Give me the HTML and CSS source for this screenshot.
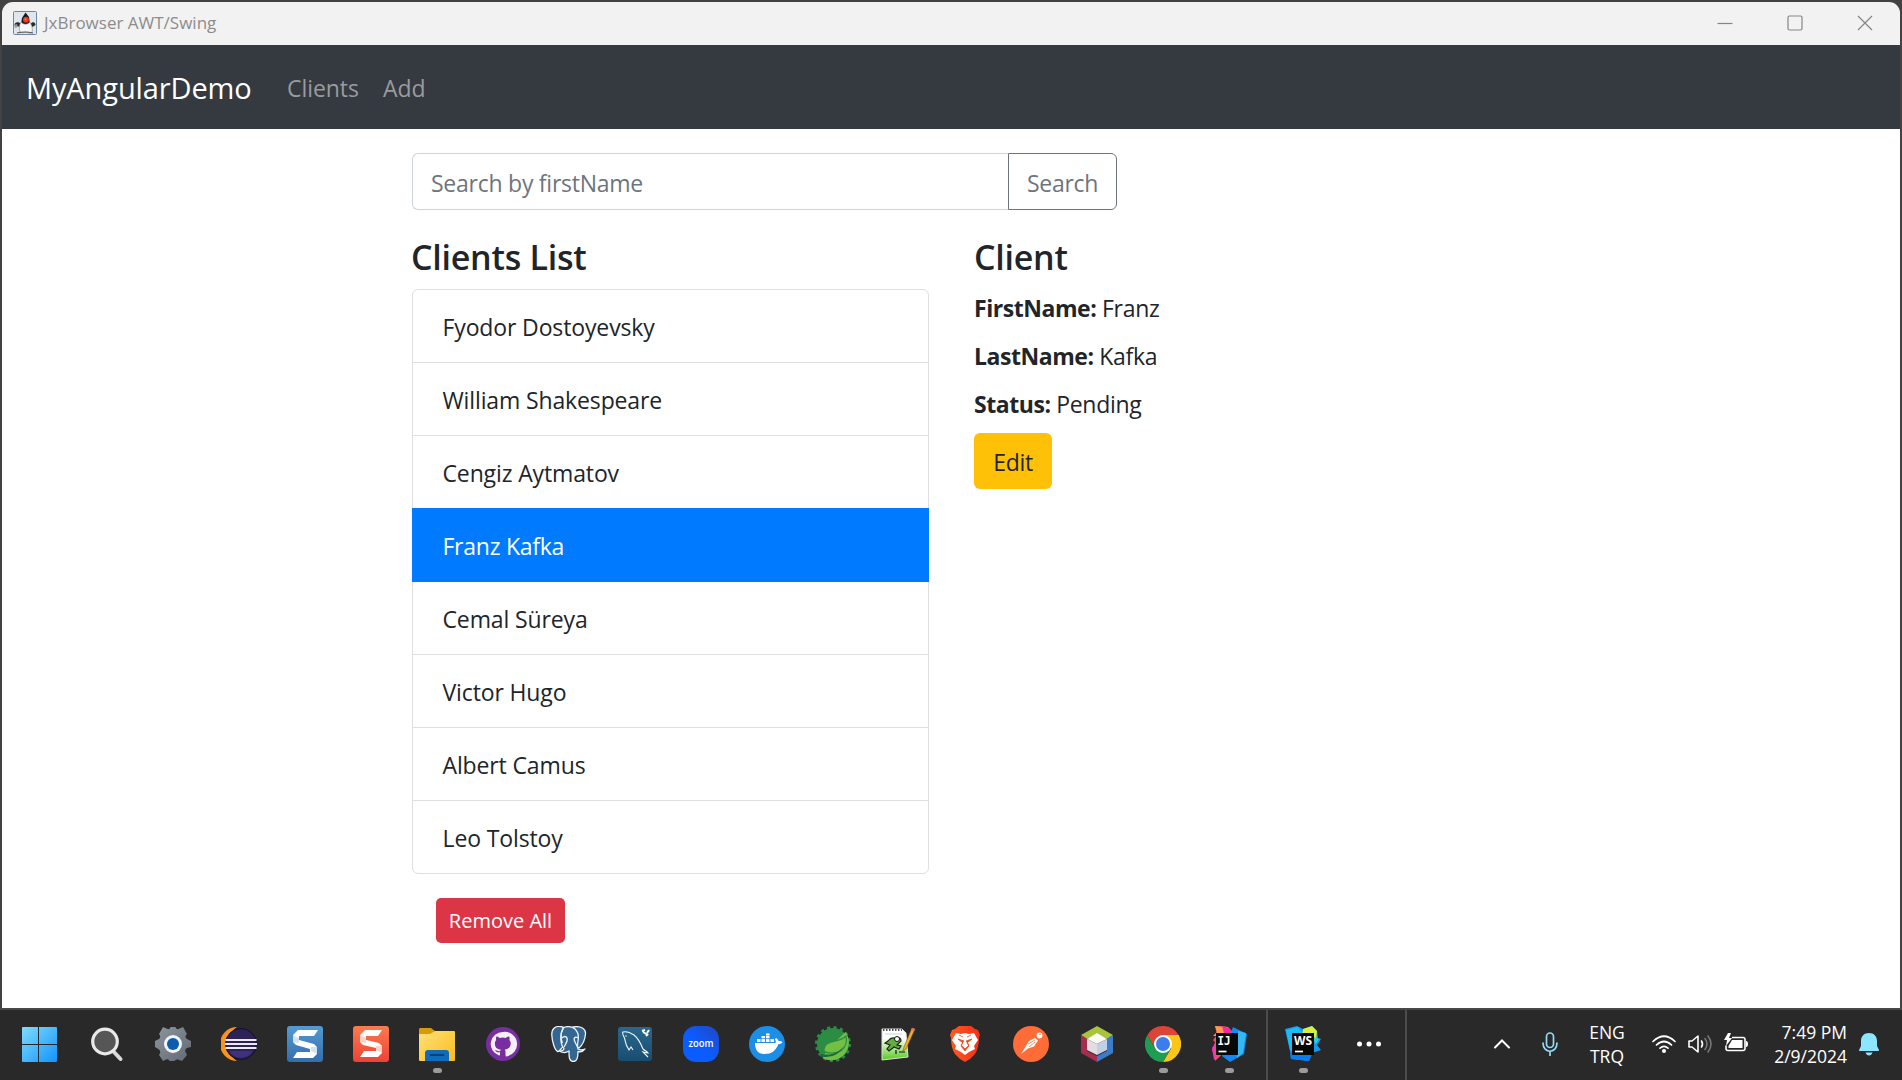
FILE: index.html
```html
<!DOCTYPE html>
<html lang="en">
<head>
<meta charset="utf-8">
<title>JxBrowser AWT/Swing</title>
<link rel="stylesheet" href="styles.css">
</head>
<body>
<div class="desktop">
  <div class="window">
    <header class="titlebar">
      <svg class="duke" viewBox="0 0 24 24">
        <rect x=".5" y=".5" width="23" height="23" rx="1" fill="#dfe6ee" stroke="#6d86a8"/>
        <path d="M1.500 14c0-3 4-4 7-1l-2 3c-2-2-3 0-5-2zM22.500 14c0-3-3-4-5-1l2 3z" fill="#2a2a2a"/>
        <path d="M12.500 1.500L9 7l-1 6h9l-1-7z" fill="#191919"/>
        <path d="M8 11c3 3 6 3 9 0 2 4 3 8 2 10-1 2-4 1-6 0-2 1-5 1-6 0-1-3-1-7 1-10z" fill="#f6f6f6" stroke="#888" stroke-width=".6"/>
        <path d="M4 22q8-2 16 0" stroke="#555" stroke-width="1.200" fill="none"/>
        <path d="M1 14l3-1 1 3-3 1z" fill="#999"/>
        <circle cx="13" cy="8.800" r="3" fill="#e8351c"/>
        <circle cx="12.500" cy="8.300" r="1.100" fill="#ff7a52"/>
      </svg>
      <span class="title">JxBrowser AWT/Swing</span>
      <div class="controls">
        <svg class="control" viewBox="0 0 16 16"><path d="M.5 8.5h15"/></svg>
        <svg class="control" viewBox="0 0 16 16"><rect x="1" y="1" width="14" height="14" rx="1.5"/></svg>
        <svg class="control" viewBox="0 0 16 16"><path d="M1 1l14 14M15 1L1 15"/></svg>
      </div>
    </header>
    <nav class="navbar">
      <a class="brand">MyAngularDemo</a>
      <a class="nav-link nav-clients">Clients</a>
      <a class="nav-link nav-add">Add</a>
    </nav>
    <main class="page">
      <div class="search">
        <div class="search-input">Search by firstName</div>
        <div class="search-button">Search</div>
      </div>
      <div class="columns">
        <section class="clients">
          <h4 class="heading">Clients List</h4>
          <ul class="list">
            <li class="item">Fyodor Dostoyevsky</li>
            <li class="item">William Shakespeare</li>
            <li class="item">Cengiz Aytmatov</li>
            <li class="item active">Franz Kafka</li>
            <li class="item">Cemal Süreya</li>
            <li class="item">Victor Hugo</li>
            <li class="item">Albert Camus</li>
            <li class="item">Leo Tolstoy</li>
          </ul>
          <div class="remove">Remove All</div>
        </section>
        <section class="details">
          <h4 class="heading">Client</h4>
          <p class="field"><strong>FirstName:</strong> Franz</p>
          <p class="field"><strong>LastName:</strong> Kafka</p>
          <p class="field"><strong>Status:</strong> Pending</p>
          <div class="edit">Edit</div>
        </section>
      </div>
    </main>
  </div>
  <footer class="taskbar">
    <div class="apps">
      <div class="app start"><svg viewBox="0 0 36 36">
        <defs><linearGradient id="win" x1="0" y1="0" x2="1" y2="1"><stop offset="0" stop-color="#7fdcff"/><stop offset="1" stop-color="#1393fb"/></linearGradient>
        <clipPath id="panes"><path d="M2 1h15v17H1V2q0-1 1-1zM18 1h17q1 0 1 1v16H18zM1 19h16v17H2q-1 0-1-1zM18 19h18v16q0 1-1 1H18z"/></clipPath></defs>
        <rect x="1" y="1" width="35" height="35" fill="url(#win)" clip-path="url(#panes)"/></svg></div>
      <div class="app"><svg viewBox="0 0 36 36"><path d="M24 25l7.5 8" stroke="#d9d9d9" stroke-width="4" stroke-linecap="round"/><circle cx="16" cy="15.5" r="12.3" fill="#565656" stroke="#e9e9e9" stroke-width="3.2"/></svg></div>
      <div class="app"><svg viewBox="0 0 36 36"><defs><linearGradient id="gear" x1="0" y1="0" x2="1" y2="1"><stop offset="0" stop-color="#8c949c"/><stop offset="1" stop-color="#626b75"/></linearGradient></defs>
        <path d="M8 1l4 1.8Q15 4 15.5 1h5Q21 4 24 2.8L28 1l4 7q-3 2.500 0 5l4 2v6l-4 1q-3 2-1 5l1 2-5 6-4-1.500q-3-.5-3.500 1.500h-5q-.5-2.500-3.500-1.500L8 35l-4-6q2.500-3 0-5.500L0 21v-6l4-2q2.500-2 0-5z" fill="url(#gear)"/><circle cx="18" cy="18" r="9" fill="#f2f5f7"/><circle cx="18" cy="18" r="6" fill="#0b5cb0"/></svg></div>
      <div class="app"><svg viewBox="0 0 36 36"><path d="M16 1A17 17 0 0 0 16 35 20 20 0 0 1 16 1z" fill="#f7941e"/><circle cx="20" cy="18" r="15.500" fill="#2c2255" stroke="#130d30"/><path d="M8 25h24a14 14 0 0 1-24 0z" fill="#40317c"/><path d="M4.500 14h31M4 18h32M4.500 22h31" stroke="#eceaf6" stroke-width="2.100"/></svg></div>
      <div class="app"><svg viewBox="0 0 36 36"><defs><linearGradient id="snagblue" x2="0" y2="1"><stop stop-color="#549bd3"/><stop offset="1" stop-color="#336dac"/></linearGradient></defs><rect width="36" height="36" rx="3" fill="url(#snagblue)"/><path d="M11 4h20l-4 6H12v4l15 4 3 3v7l-4 4H6l4-6h13v-3L9 19l-3-3V9z" fill="#fff"/><path d="M6 9v7l6 1v-5zM30 21v7l-6-3v-4z" fill="#d4e2ef"/></svg></div>
      <div class="app"><svg viewBox="0 0 36 36"><defs><linearGradient id="snagred" x2="0" y2="1"><stop stop-color="#fb7b4e"/><stop offset="1" stop-color="#ef4136"/></linearGradient></defs><rect width="36" height="36" rx="3" fill="url(#snagred)"/><path d="M12 4h17l-4 6H13v4l13 3 3 3v7l-4 4H7l4-6h12v-3L10 19l-3-3V9z" fill="#fff"/><path d="M7 9v7l6 1v-5zM29 20v7l-6-3v-4z" fill="#fbd1c8"/></svg></div>
      <div class="app running"><svg viewBox="0 0 36 36"><defs><linearGradient id="folder" x2="1" y2="1"><stop stop-color="#ffe17a"/><stop offset="1" stop-color="#f9bd1b"/></linearGradient></defs><path d="M1 2h11l4 3-3 4H0V3z" fill="#d79b08"/><path d="M0 8h11l5-3h19q1 0 1 1v28q0 1-1 1H1q-1 0-1-1z" fill="url(#folder)"/><path d="M6 34v-7q0-3 3-3h18q3 0 3 3v8H6z" fill="#0f6cbd"/><path d="M11.500 29h13" stroke="#0a3f7a" stroke-width="1.800" stroke-linecap="round"/></svg></div>
      <div class="app"><svg viewBox="0 0 36 36"><circle cx="18" cy="18" r="17" fill="#782da0"/><path d="M18 6a12 12 0 0 0-4 23.400c.8.100 1-.4 1-.9v-2.300c-3.400.7-4.400-1.200-4.900-2.500 1.800.8 2.300 1.600 5.200 1.400 0-.7.300-1.200.6-1.500-5-.6-6-3.400-6-6.200 0-1.500.5-2.500 1.300-3.300-.4-1.300-.2-2.600.2-3.500 1.300 0 2.500.7 3.400 1.400q3-.8 6 0c1-.8 2-1.400 3.400-1.400.5 1.200.5 2.400.2 3.500.9 1 1.300 2 1.300 3.300 0 3.400-2 5.700-6 6.200.6.600.8 1.400.8 2.300v3.600c0 .5.300 1 1 .9A12 12 0 0 0 18 6z" fill="#f4effa"/></svg></div>
      <div class="app"><svg viewBox="0 0 36 36" fill="#336791" stroke="#eef3f7" stroke-width="1.300" stroke-linejoin="round"><path d="M12 1C4-1 .5 3 .8 9c.2 6 3 16 6 16.500 2 .3 3-3 5-4.500z"/><path d="M22 1c8-1.500 13 2 12.500 7-.5 6-3 11-6.500 14l-6-2z"/><path d="M12 2c3-2 9-2 12 1 3 3 4 7 3 12-.5 3-1 6 0 8 2 1 5 1 7 0-2 3-5 3-7 2.500 0 4 0 10-4.500 10S18 31 18 25c-3 2-6 2-9 .5 2-1 4-1 4-3-4-4-4-14-1-20.500z"/><path d="M11 12c3-3 6-1 5 3-.5 2-2 4-3 6M27 12c-3-2-5 0-3 4l3 6M12.500 2c-3 5-3 11-1 15" fill="none"/></svg></div>
      <div class="app"><svg viewBox="0 0 36 36"><defs><linearGradient id="sql" x2="0" y2="1"><stop stop-color="#28688e"/><stop offset="1" stop-color="#194d70"/></linearGradient></defs><rect x="1" y="1" width="34" height="34" rx="3" fill="url(#sql)"/><path d="M11 22c-3-3-2-7-4-11-1-2-2-4-1-5 4-1 8 1 11 3 5 4 7 9 9 14 2 2 4 2 5 4l-5-1 5 5M11 22l1 2 2-3 2 3" fill="none" stroke="#f2f6f9" stroke-width="1.100"/><circle cx="9" cy="10" r=".7" fill="#fff"/><path d="M26 6l5 3M30 7l2-3M28 4l-3 1M31 8l-2 2" stroke="#fff" stroke-width="2"/></svg></div>
      <div class="app"><svg viewBox="0 0 36 36"><defs><linearGradient id="zoom" x1=".4" y1=".5" x2=".9" y2="0"><stop stop-color="#0b5cff"/><stop offset="1" stop-color="#2148c8"/></linearGradient></defs><rect width="36" height="36" rx="13" fill="url(#zoom)"/><text class="zoom-word" x="18" y="20.500" text-anchor="middle" textLength="25" lengthAdjust="spacingAndGlyphs">zoom</text></svg></div>
      <div class="app"><svg viewBox="0 0 36 36"><circle cx="18" cy="18" r="18" fill="#1d8ee6"/><path d="M6 17h20c1 0 1-2 0-4l1-1c2 1 2 2 2.500 3 2-.3 3 .2 4 1-1 2-3 2-4 2-3 7-7 10-14 10C9 28 6 24 6 17z" fill="#fff"/><path d="M8 13h3.500v3H8zM12.500 13H16v3h-3.500zM17 13h3.500v3H17zM21.500 13H25v3h-3.500zM12.500 10H16v2.300h-3.500zM17 10h3.500v2.300H17zM17 7.500h3.500v2H17z" fill="#fff"/></svg></div>
      <div class="app"><svg viewBox="0 0 36 36"><circle cx="18" cy="18" r="16" fill="#2c8c44"/><circle cx="18" cy="18" r="16.500" fill="none" stroke="#2c8c44" stroke-width="3" stroke-dasharray="3.100 3.380"/><path d="M30.500 6A17.800 17.800 0 0 1 7.500 32L12 24z" fill="#72bf44"/><path d="M31 10c2 9-3 17-14 17-3 0-6 0-8-2 0-13 15-7 22-15z" fill="#72bf44" stroke="#2c8c44" stroke-width="1.200"/><path d="M6 28c10 2 17-1 23-8-5 9-12 11-21 11-3 0-4-2-2-3z" fill="#1a6b3b"/></svg></div>
      <div class="app"><svg viewBox="0 0 36 36"><defs><linearGradient id="pad" x2="0" y2="1"><stop offset=".3" stop-color="#fff"/><stop offset="1" stop-color="#58c91c"/></linearGradient></defs><path d="M1 3h20l4 4 2 24-26 3z" fill="url(#pad)" stroke="#ddd"/><path d="M2 4h19" stroke="#555" stroke-width="2" stroke-dasharray="1.500 1.500"/><path d="M4 8h17" stroke="#c9d0d8"/><path d="M7 15q4-5 8-2 5-3 5 2l-4 4 4 1-2 3-5-2-5 4-2-2 3-4-5-2z" fill="#64ad43" stroke="#182713" stroke-width="1.200"/><circle cx="16" cy="13" r="2.500" fill="#fff" stroke="#111"/><path d="M15 28v-4M18 26h6" stroke="#111" stroke-width="1.200"/><path d="M31 2l3 1-9 20-3 2 1-4z" fill="#f4ad25" stroke="#8b5a12" stroke-width=".6"/><path d="M31 2l3 1-1 2-3-1z" fill="#e16b99"/></svg></div>
      <div class="app"><svg viewBox="0 0 36 36"><defs><linearGradient id="brave"><stop stop-color="#ff5b20"/><stop offset="1" stop-color="#f32e19"/></linearGradient></defs><path d="M12 0h12l4 3 3 1 2 5-1 3q0 10-4 16-4 5-10 8-6-3-10-8-4-6-4-16L3 9l2-5 3-1z" fill="url(#brave)"/><path d="M9 7l5 1 4-1 4 1 5-1 4 7-4 6 1 3-6 3-4 3-4-3-6-3 1-3-4-6z" fill="#fff"/><path d="M11 13l6 2-3 4 4 4 4-4-3-4 6-2-5 4 2 3-4 5-4-5 2-3zM12 9l4 2M24 9l-4 2" fill="#f04821" stroke="#f04821" stroke-width=".8"/></svg></div>
      <div class="app"><svg viewBox="0 0 36 36"><circle cx="18" cy="18" r="18" fill="#ff6c37"/><circle cx="26.500" cy="9.500" r="2.900" fill="#fff"/><path d="M22 12l3 2.500-4 6-6 2-7 5.500 5-8 3-5z" fill="#fff"/><path d="M26 9l2-1M15 18l7-4M16 21l6-5" stroke="#ff6c37" stroke-width=".8"/></svg></div>
      <div class="app"><svg viewBox="0 0 36 36"><path d="M18 0l16 9-6 4-10-5-10 5-6-4z" fill="#a9c33c"/><path d="M2 9l6 4v12l10 5v6L2 27z" fill="#a72d50"/><path d="M34 9l-6 4v12l-10 5v6l16-9z" fill="#3b7dcb"/><path d="M18 7l10 6-10 5-10-5z" fill="#f8faf3"/><path d="M8 13l10 5v11L8 24z" fill="#e2dce3"/><path d="M28 13l-10 5v11l10-5z" fill="#c1d0e7"/></svg></div>
      <div class="app running"><svg viewBox="0 0 36 36"><path d="M2.400 9A18 18 0 0 1 33.600 9H18z" fill="#db4437"/><path d="M33.600 9A18 18 0 0 1 18 36l8-13.500L18 9z" fill="#ffc515"/><path d="M2.400 9A18 18 0 0 0 18 36l8-13.500H10z" fill="#1f9d55"/><path d="M2.400 9l8 14L18 9z" fill="#db4437"/><circle cx="18" cy="18" r="9" fill="#fff"/><circle cx="18" cy="18" r="7" fill="#3b7ded"/></svg></div>
      <div class="app running"><svg viewBox="0 0 36 36"><path d="M4 0l13 1 4 4-1 15-16 15-1-9-2-1 3-9-2-2 4-5z" fill="#ff4766"/><path d="M4 0l13 1-6 9H2l4-4z" fill="#ff9a4a"/><path d="M1 22l5-7v15l-3 4z" fill="#ee3cb1"/><path d="M11 0l7 2 3 5-7 4z" fill="#f22b9c"/><path d="M22 1l14 7-3 20-14 8-8-6z" fill="#1488f2"/><path d="M27 5l8 2-3 20-6 5z" fill="#36b9f3"/><path d="M5 7h22v22H5z" fill="#080808"/><text class="ide-word ide-mono" x="6.500" y="18.500" textLength="13" lengthAdjust="spacingAndGlyphs">IJ</text><path d="M7.500 25.500h8" stroke="#fff" stroke-width="1.700"/></svg></div>
    </div>
    <div class="group">
      <div class="app running"><svg viewBox="0 0 36 36"><path d="M0 3l12-3 6 3 9-3 5 5 1 7 3 1-4 6 4 5-9 3-3 8-18-2-1-8z" fill="#1699ed"/><path d="M18 3l9-3 5 5-1 9-14-4z" fill="#d8ef3f"/><path d="M1 4l12-3 4 5v24L5 24z" fill="#19bdf5"/><path d="M26 10l8 3-3 5z" fill="#22d2db"/><path d="M5 26l22 2-3 7-18-2z" fill="#087cf1"/><path d="M7 7h22v22H7z" fill="#080808"/><text class="ide-word" x="9" y="18.500" textLength="18" lengthAdjust="spacingAndGlyphs">WS</text><path d="M10 25.500h8" stroke="#fff" stroke-width="1.700"/></svg></div>
      <div class="app"><svg viewBox="0 0 36 36" fill="#fff"><circle cx="8.500" cy="18" r="2.500"/><circle cx="18" cy="18" r="2.500"/><circle cx="27.500" cy="18" r="2.500"/></svg></div>
    </div>
    <div class="tray">
      <svg class="tray-icon chevron" viewBox="0 0 24 24"><path d="M5 15.500l7-7 7 7" stroke="#fff" stroke-width="2" fill="none" stroke-linecap="round"/></svg>
      <svg class="tray-icon mic" viewBox="0 0 24 24" fill="none" stroke="#8fdcf5" stroke-width="1.700" stroke-linecap="round"><rect x="8.500" y="1" width="7" height="14.500" rx="3.500"/><path d="M5 11c0 11 14 11 14 0M12 19.500v4"/></svg>
      <div class="language"><span>ENG</span><span>TRQ</span></div>
      <svg class="tray-icon wifi" viewBox="0 0 24 24" fill="none" stroke="#fff" stroke-width="1.700" stroke-linecap="round"><path d="M1 9.500q11-10.500 22 0M4.500 13q7.500-7 15 0M8 16.200q4-3.500 8 0"/><circle cx="12" cy="19" r="1.200" fill="#fff"/></svg>
      <svg class="tray-icon volume" viewBox="0 0 24 24" fill="none" stroke="#fff" stroke-width="1.600" stroke-linejoin="round" stroke-linecap="round"><path d="M1 9h3l6-5v16l-6-5H1zM13.500 9q2 3 0 6"/><path d="M17 6.500q4 5.500 0 11M20 4q6 8 0 16" stroke="#777"/></svg>
      <svg class="tray-icon battery" viewBox="0 0 24 24"><path d="M8 5.500h11q2 0 2 2v9q0 2-2 2H4q-2 0-2-2v-3" fill="none" stroke="#fff" stroke-width="1.600"/><path d="M8 8h10.500v8H4.500v-2zM22 9q2 0 2 3t-2 3z" fill="#fff"/><path d="M4 1L0 8h3l-1 6 6-8H5l2-5z" fill="#fff"/></svg>
      <div class="clock"><span>7:49 PM</span><span>2/9/2024</span></div>
      <svg class="tray-icon bell" viewBox="0 0 24 24" fill="#8ee5ff"><path d="M12 1c-5 0-8 3.500-8 8v5l-2 4q-.4 1 1 1h18q1.400 0 1-1l-2-4V9c0-4.500-3-8-8-8zM8.500 20.500h7q-1 3-3.500 3t-3.500-3z"/></svg>
    </div>
  </footer>
</div>
</body>
</html>
```
FILE: styles.css
```css
* { box-sizing: border-box; }
body { margin: 0; font-family: "Open Sans", "Noto Sans", sans-serif; background: #3c3c3c; }
.desktop { width: 1902px; height: 1080px; display: flex; flex-direction: column; overflow: hidden; background: #424242; }
.window { height: 1008px; padding: 2px 2px 0; display: flex; flex-direction: column; flex: none; }
.titlebar { height: 43px; display: flex; align-items: center; background: #f2f2f2; border-radius: 11px 11px 0 0; padding: 0 27px 2px 11px; flex: none; }
.duke { width: 24px; height: 24px; }
.title { margin: 0 0 0 7px; color: #8c8c8c; font-size: 17px; letter-spacing: 0; font-kerning: none; white-space: nowrap; }
.controls { margin-left: auto; display: flex; gap: 54px; align-items: center; }
.control { width: 16px; height: 16px; fill: none; stroke: #858585; stroke-width: 1.200; }
.navbar { height: 84px; background: #343a40; display: flex; align-items: center; padding: 0 24px; flex: none; white-space: nowrap; }
.brand { color: #fff; font-size: 29px; width: 261px; letter-spacing: -.12px; }
.nav-link { color: #999c9f; font-size: 23px; padding-top: 2px; letter-spacing: -.05px; }
.nav-clients { width: 96px; }
.page { flex: 1; background: #fff; padding: 24px 410px; color: #212529; font-size: 23px; letter-spacing: -.3px; }
.search { display: flex; width: 705px; height: 57px; line-height: 58px; white-space: nowrap; }
.search-input { flex: 1; border: 1px solid #ced4da; border-right: 0; border-radius: 6px 0 0 6px; padding-left: 18px; color: #6c757d; letter-spacing: -.25px; }
.search-button { width: 109px; border: 1px solid #6c757d; border-radius: 0 6px 6px 0; color: #6c757d; text-align: center; }
.columns { display: flex; gap: 45px; margin-top: 24px; }
.clients { width: 517px; }
.heading { margin: 0 0 12px; height: 43px; line-height: 47px; font-size: 34px; font-weight: 600; letter-spacing: -.25px; }
.clients .heading { margin-left: -1px; }
.list { list-style: none; margin: 0; padding: 0; border: 1px solid #dfdfdf; border-radius: 6px; }
.item { height: 73px; padding: 19px 29.5px 16px; line-height: 37px; border-bottom: 1px solid #dfdfdf; font-kerning: none; letter-spacing: -.13px; }
.item:last-child { border-bottom: 0; height: 72px; }
.active { background: #007bff; color: #fff; margin: -1px -1px 0; padding: 20px 30.5px 17px; height: 74px; border: 0; letter-spacing: -.25px; }
.remove { width: 129px; height: 45px; margin: 24px 0 0 24px; border-radius: 5px; background: #dc3545; color: #fff; line-height: 46px; font-size: 20px; letter-spacing: 0; font-kerning: none; text-align: center; }
.field { margin: 0 0 12px; height: 36px; line-height: 38px; white-space: nowrap; }
.field strong { letter-spacing: -.45px; }
.edit { width: 78px; height: 56px; line-height: 58px; border-radius: 6px; background: #ffc107; text-align: center; }
.taskbar { height: 72px; flex: none; border-top: 2px solid #484848; background: #292929; display: flex; }
.apps { display: flex; width: 1266px; padding-left: 6px; }
.app { width: 66px; height: 70px; display: flex; flex-direction: column; align-items: center; padding-top: 16px; flex: none; }
.app svg { width: 36px; height: 36px; flex: none; }
.start { margin-right: 2px; }
.running::after { content: ""; width: 9px; height: 5px; margin-top: 6px; border-radius: 3px; background: #9b9b9b; }
.group { display: flex; width: 141px; padding-left: 2px; border-left: 2px solid #4c4c4c; border-right: 2px solid #4c4c4c; flex: none; }
.zoom-word { font: 600 10px "Open Sans", sans-serif; fill: #fff; }
.ide-word { font: 700 13px "Open Sans", sans-serif; fill: #fff; }
.ide-mono { font-family: "DejaVu Sans Mono", monospace; }
.tray { flex: 1; display: flex; align-items: center; padding: 0 21px 3px 83px; color: #fff; font-size: 17.5px; letter-spacing: 0; line-height: 24px; white-space: nowrap; }
.tray-icon { width: 24px; height: 24px; flex: none; }
.mic { margin-left: 24px; }
.language { width: 46px; margin-left: 22px; display: flex; flex-direction: column; align-items: center; }
.wifi { margin-left: 22px; }
.volume { margin-left: 12px; }
.battery { margin-left: 12px; }
.clock { margin-left: auto; margin-right: 10px; display: flex; flex-direction: column; align-items: flex-end; }
```
